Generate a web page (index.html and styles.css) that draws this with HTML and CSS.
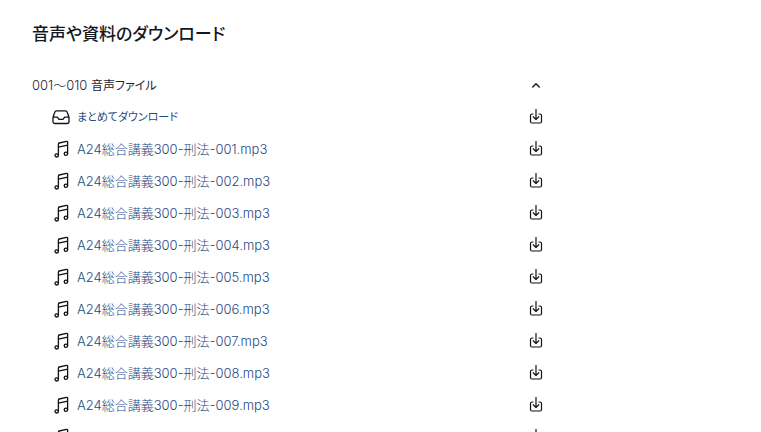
FILE: index.html
```
<!DOCTYPE html>
<html lang="ja">
<head>
    <meta charset="utf-8">
    <meta name="viewport" content="width=device-width, initial-scale=1">
    <title>音声や資料のダウンロード</title>
    <link rel="stylesheet" href="styles.css">
</head>
<body>
    <!-- アイコン定義 -->
    <svg class="sprite" aria-hidden="true">
        <symbol id="icon-inbox" viewBox="0 0 18 18">
            <path d="M1 9.200 2.800 4.200Q3.200 2.800 4.600 2.800h8.800q1.400 0 1.800 1.400L17 9.200v4.300q0 2-2 2H3q-2 0-2-2V9.200h3.600q1.200 0 1.600 1 .4 1.200 1.600 1.200h2.400q1.200 0 1.600-1.200.4-1 1.600-1H17"/>
        </symbol>
        <symbol id="icon-music" viewBox="0 0 18 18">
            <path d="M6.400 15.200V4q0-.8.800-1L14.600 1.400q1-.2 1 .7V13.500M6.400 7.200l9.200-2"/>
            <ellipse cx="4.700" cy="15.400" rx="1.700" ry="1.600"/>
            <ellipse cx="13.900" cy="13.800" rx="1.700" ry="1.600"/>
        </symbol>
        <symbol id="icon-download" viewBox="0 0 16 16">
            <path d="M5 5H4Q2.500 5 2.500 6.500V12.500Q2.500 14 4 14h8q1.500 0 1.500-1.500V6.500Q13.500 5 12 5h-1M8 .5V10.300M5.200 7.800 8 10.500l2.800-2.700"/>
        </symbol>
    </svg>

    <main class="downloads">
        <h1 class="title">音声や資料のダウンロード</h1>

        <section class="group">
            <button class="group-header" type="button" aria-expanded="true" aria-controls="fileList">
                <span>001～010 <span class="group-kind">音声ファイル</span></span>
                <svg class="chevron" viewBox="0 0 16 16" aria-hidden="true"><path d="m4.800 10 3.200-3.200 3.200 3.200"/></svg>
            </button>
            <ul class="file-list" id="fileList">
                <li><a class="file file-all" href="#all"><svg class="icon"><use href="#icon-inbox"/></svg><span class="file-name">まとめてダウンロード</span><svg class="download"><use href="#icon-download"/></svg></a></li>
                <li><a class="file" href="#001"><svg class="icon"><use href="#icon-music"/></svg><span class="file-name">A24総合講義300-刑法-001.mp3</span><svg class="download"><use href="#icon-download"/></svg></a></li>
                <li><a class="file" href="#002"><svg class="icon"><use href="#icon-music"/></svg><span class="file-name">A24総合講義300-刑法-002.mp3</span><svg class="download"><use href="#icon-download"/></svg></a></li>
                <li><a class="file" href="#003"><svg class="icon"><use href="#icon-music"/></svg><span class="file-name">A24総合講義300-刑法-003.mp3</span><svg class="download"><use href="#icon-download"/></svg></a></li>
                <li><a class="file" href="#004"><svg class="icon"><use href="#icon-music"/></svg><span class="file-name">A24総合講義300-刑法-004.mp3</span><svg class="download"><use href="#icon-download"/></svg></a></li>
                <li><a class="file" href="#005"><svg class="icon"><use href="#icon-music"/></svg><span class="file-name">A24総合講義300-刑法-005.mp3</span><svg class="download"><use href="#icon-download"/></svg></a></li>
                <li><a class="file" href="#006"><svg class="icon"><use href="#icon-music"/></svg><span class="file-name">A24総合講義300-刑法-006.mp3</span><svg class="download"><use href="#icon-download"/></svg></a></li>
                <li><a class="file" href="#007"><svg class="icon"><use href="#icon-music"/></svg><span class="file-name">A24総合講義300-刑法-007.mp3</span><svg class="download"><use href="#icon-download"/></svg></a></li>
                <li><a class="file" href="#008"><svg class="icon"><use href="#icon-music"/></svg><span class="file-name">A24総合講義300-刑法-008.mp3</span><svg class="download"><use href="#icon-download"/></svg></a></li>
                <li><a class="file" href="#009"><svg class="icon"><use href="#icon-music"/></svg><span class="file-name">A24総合講義300-刑法-009.mp3</span><svg class="download"><use href="#icon-download"/></svg></a></li>
                <li><a class="file" href="#010" aria-label="A24総合講義300-刑法-010.mp3"><svg class="icon"><use href="#icon-music"/></svg><span class="file-name"></span><svg class="download"><use href="#icon-download"/></svg></a></li>
            </ul>
        </section>
    </main>
</body>
</html>
```

FILE: styles.css
```
* {
    box-sizing: border-box;
}

body {
    margin: 0;
    background: #fff;
    color: #1d2433;
    font-family: Inter, "Noto Sans CJK JP", sans-serif;
    font-size: 13px;
    font-weight: 300;
    line-height: 20px;
    font-feature-settings: "palt";
}

.sprite {
    display: none;
}

.downloads {
    max-width: 576px;
    height: 100vh;
    padding: 20px 32px 0;
    overflow: hidden;
}

.title {
    margin: 0 0 20px;
    color: #14171f;
    font-size: 17px;
    font-weight: 500;
    line-height: 29px;
}

.group-header {
    display: flex;
    justify-content: space-between;
    align-items: center;
    width: 100%;
    height: 32px;
    padding: 0;
    border: none;
    background: none;
    color: inherit;
    font: inherit;
    font-feature-settings: inherit;
    text-align: left;
    cursor: pointer;
}

.group-kind {
    font-size: 12px;
    font-weight: 400;
}

.file-list {
    margin: 0;
    padding: 0 0 0 20px;
    list-style: none;
}

.file {
    display: flex;
    align-items: center;
    gap: 7px;
    height: 32px;
    color: #1f4a85;
    text-decoration: none;
}

.file:hover .file-name {
    text-decoration: underline;
}

.file-name {
    flex: 1;
}

.file-all {
    font-size: 11px;
    font-weight: 400;
}

.icon,
.download,
.chevron {
    flex: none;
    fill: none;
    stroke: #111;
    stroke-linecap: round;
    stroke-linejoin: round;
}

.icon {
    width: 18px;
    height: 18px;
    stroke-width: 1.3;
}

.download {
    width: 16px;
    height: 16px;
    stroke-width: 1.2;
}

.chevron {
    width: 16px;
    height: 16px;
    stroke: #1d2433;
    stroke-width: 1.6;
}
```
